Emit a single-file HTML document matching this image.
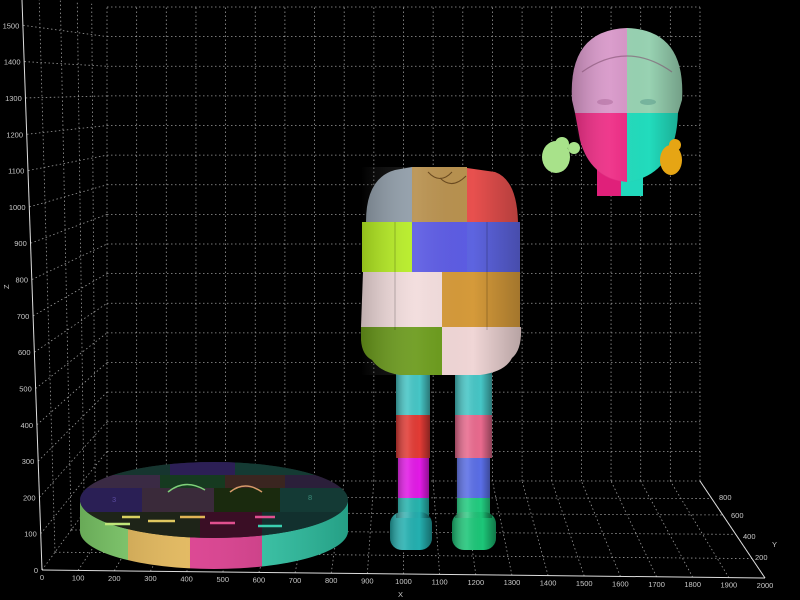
<!DOCTYPE html>
<html><head><meta charset="utf-8"><style>
html,body{margin:0;padding:0;background:#000;width:800px;height:600px;overflow:hidden}
svg{display:block}
text{font-family:"Liberation Sans",sans-serif;font-size:7.5px;fill:#c8c8c8}
</style></head><body>
<svg id="s" width="800" height="600" viewBox="0 0 800 600" xmlns="http://www.w3.org/2000/svg">
<defs>
<linearGradient id="sh" x1="0" x2="1"><stop offset="0" stop-color="#000" stop-opacity=".35"/><stop offset=".35" stop-color="#fff" stop-opacity=".12"/><stop offset=".7" stop-color="#000" stop-opacity="0"/><stop offset="1" stop-color="#000" stop-opacity=".4"/></linearGradient>
<linearGradient id="sh2" x1="0" x2="1"><stop offset="0" stop-color="#000" stop-opacity=".3"/><stop offset=".4" stop-color="#fff" stop-opacity=".15"/><stop offset="1" stop-color="#000" stop-opacity=".35"/></linearGradient>
<clipPath id="side"><path d="M80 502 L80 531 A134 38 0 0 0 348 531 L348 502 Z"/></clipPath>
<clipPath id="dc"><ellipse cx="214" cy="500" rx="134" ry="38"/></clipPath>
</defs>
<g id="grid" stroke="#9a9a9a" stroke-width="0.8" stroke-dasharray="1.5,2.5" fill="none"></g>
<g id="axes" stroke="#ddd" stroke-width="1" fill="none">
<line x1="42" y1="570" x2="22" y2="0"/>
<line x1="42" y1="570" x2="765" y2="578"/>
<line x1="765" y1="578" x2="700" y2="481"/>
</g>
<g id="labels"></g>
<text x="398" y="597">X</text>
<text x="772" y="547">Y</text>
<text x="4" y="290" transform="rotate(-90 6 287)">Z</text>

<!-- disk -->
<g>
<g clip-path="url(#side)">
<rect x="80" y="490" width="48" height="90" fill="#7fcf6a"/>
<rect x="128" y="490" width="62" height="90" fill="#e0b455"/>
<rect x="190" y="490" width="72" height="90" fill="#d9378a"/>
<rect x="262" y="490" width="86" height="90" fill="#2ec9a8"/>
<rect x="80" y="490" width="268" height="90" fill="url(#sh2)" opacity=".6"/>
</g>
<ellipse cx="214" cy="500" rx="134" ry="38" fill="#1e2a2a"/>
<g clip-path="url(#dc)">
<rect x="80" y="462" width="90" height="13" fill="#16352f"/>
<rect x="170" y="462" width="65" height="13" fill="#2c1f55"/>
<rect x="235" y="462" width="113" height="13" fill="#143a33"/>
<rect x="80" y="475" width="80" height="13" fill="#3a2a44"/>
<rect x="160" y="475" width="65" height="13" fill="#163a20"/>
<rect x="225" y="475" width="60" height="13" fill="#3a2520"/>
<rect x="285" y="475" width="63" height="13" fill="#2b1f3a"/>
<rect x="80" y="488" width="62" height="24" fill="#2a1f55"/>
<rect x="142" y="488" width="72" height="24" fill="#3a2a3a"/>
<rect x="214" y="488" width="66" height="24" fill="#1a2a0e"/>
<rect x="280" y="488" width="68" height="24" fill="#143a35"/>
<rect x="80" y="512" width="120" height="30" fill="#1e2418"/>
<rect x="200" y="512" width="62" height="30" fill="#3a0e25"/>
<rect x="262" y="512" width="86" height="30" fill="#12302e"/>
</g>
<path d="M168 492 Q185 478 205 490" stroke="#7fd07a" stroke-width="1.5" fill="none"/>
<path d="M230 492 Q245 480 262 492" stroke="#d79a6a" stroke-width="1.5" fill="none"/>
<text x="112" y="502" style="fill:#5a4aa0">3</text>
<text x="308" y="500" style="fill:#3a8a78">8</text>
<g stroke-width="2.5">
<line x1="105" y1="524" x2="130" y2="524" stroke="#bfe67a"/>
<line x1="122" y1="517" x2="140" y2="517" stroke="#d8d060"/>
<line x1="148" y1="521" x2="175" y2="521" stroke="#e0c860"/>
<line x1="180" y1="517" x2="205" y2="517" stroke="#e0b455"/>
<line x1="210" y1="523" x2="235" y2="523" stroke="#e0508f"/>
<line x1="255" y1="517" x2="275" y2="517" stroke="#e04f90"/>
<line x1="258" y1="526" x2="282" y2="526" stroke="#3ad0b0"/>
</g>
</g>

<!-- doll legs -->
<g>
<rect x="396" y="372" width="34" height="45" fill="#46c6c6"/>
<rect x="455" y="372" width="37" height="45" fill="#46c6c6"/>
<rect x="396" y="415" width="34" height="43" fill="#e23b35"/>
<rect x="455" y="415" width="37" height="43" fill="#e96a8e"/>
<rect x="398" y="458" width="31" height="40" fill="#e21ae6"/>
<rect x="457" y="458" width="33" height="40" fill="#5a6ee6"/>
<rect x="398" y="498" width="31" height="20" fill="#27b4ae"/>
<rect x="457" y="498" width="33" height="20" fill="#22cc80"/>
<rect x="390" y="512" width="42" height="38" rx="12" fill="#24b0b0"/>
<rect x="452" y="512" width="44" height="38" rx="12" fill="#1cc678"/>
<rect x="396" y="372" width="34" height="146" fill="url(#sh)"/>
<rect x="455" y="372" width="37" height="146" fill="url(#sh)"/>
<rect x="390" y="512" width="42" height="38" rx="12" fill="url(#sh)"/>
<rect x="452" y="512" width="44" height="38" rx="12" fill="url(#sh)"/>
</g>
<!-- doll body -->
<g>
<path d="M366 222 Q366 178 395 170 L412 167 L412 222 Z" fill="#8f9ca8"/>
<rect x="412" y="167" width="55" height="55" fill="#b8914f"/>
<path d="M467 168 L495 172 Q517 180 518 222 L467 222 Z" fill="#e8504e"/>
<rect x="362" y="222" width="50" height="50" fill="#b7ef21"/>
<rect x="412" y="222" width="55" height="50" fill="#5d5ce3"/>
<rect x="467" y="222" width="53" height="50" fill="#5d64e0"/>
<path d="M363 272 L442 272 L442 327 L361 327 Z" fill="#f2dcdc"/>
<rect x="442" y="272" width="78" height="55" fill="#d59a3a"/>
<path d="M361 327 L442 327 L442 375 L400 375 Q380 372 372 360 Q362 355 361 340 Z" fill="#6a9a1a"/>
<path d="M442 327 L521 327 Q522 350 512 358 Q505 372 480 375 L442 375 Z" fill="#f0d6d6"/>
<path d="M361 167 H521 V375 H361 Z" fill="url(#sh)" opacity=".6"/>
<path d="M395 222 V330 M487 222 V330" stroke="#000" stroke-opacity=".15" stroke-width="1.5"/>
<path d="M428 172 Q440 185 452 172" stroke="#6a4a20" fill="none"/>
<path d="M440 178 Q452 190 466 176" stroke="#6a4a20" fill="none"/>
</g>

<!-- head -->
<g>
<rect x="597" y="160" width="24" height="36" fill="#e0207a"/>
<rect x="621" y="160" width="22" height="36" fill="#21d8bc"/>
<path d="M572 100 Q568 30 627 28 L627 113 L575 113 Z" fill="#d796c8"/>
<path d="M627 28 Q686 30 682 100 L678 113 L627 113 Z" fill="#98d2b2"/>
<path d="M575 113 L627 113 L627 182 Q590 178 580 140 Z" fill="#ee2a84"/>
<path d="M627 113 L678 113 Q676 175 627 182 Z" fill="#22dcbd"/>
<path d="M572 100 Q568 30 627 28 Q686 30 682 100 Q676 180 627 182 Q578 180 572 100 Z" fill="url(#sh)" opacity=".6"/>
<path d="M582 72 Q627 40 672 72" stroke="#805070" stroke-width="1.2" fill="none" opacity=".6"/>
<ellipse cx="605" cy="102" rx="8" ry="3" fill="#b070a0" opacity=".6"/>
<ellipse cx="648" cy="102" rx="8" ry="3" fill="#60a090" opacity=".6"/>
<ellipse cx="556" cy="157" rx="14" ry="16" fill="#a8e28a"/>
<circle cx="562" cy="144" r="7" fill="#a8e28a"/>
<circle cx="574" cy="148" r="6" fill="#a8e28a"/>
<ellipse cx="671" cy="160" rx="11" ry="15" fill="#e6a514"/>
<circle cx="675" cy="145" r="6" fill="#e6a514"/>
</g>
</svg>
<script>
(function(){
var g=document.getElementById('grid'),L=document.getElementById('labels'),NS='http://www.w3.org/2000/svg';
function ln(a,b,c,d){var e=document.createElementNS(NS,'line');e.setAttribute('x1',a);e.setAttribute('y1',b);e.setAttribute('x2',c);e.setAttribute('y2',d);g.appendChild(e);}
function tx(x,y,t,anc){var e=document.createElementNS(NS,'text');e.setAttribute('x',x);e.setAttribute('y',y);if(anc)e.setAttribute('text-anchor',anc);e.textContent=t;L.appendChild(e);}
function F(u,w){return [42+723*u-20*w, 570+8*u-581*w];}
function B(u,w){return [107+593*u, 481-474*w];}
function P(u,v,w){var f=F(u,w),b=B(u,w);return [f[0]+(b[0]-f[0])*v,f[1]+(b[1]-f[1])*v];}
var i,p,q,D=[0.2,0.45,0.65,0.82];
for(i=0;i<=20;i++){p=B(i/20,0);q=B(i/20,1);ln(p[0],p[1],q[0],q[1]);}
for(i=0;i<=16;i++){p=B(0,i/16);q=B(1,i/16);ln(p[0],p[1],q[0],q[1]);}
for(i=0;i<=20;i++){p=F(i/20,0);q=B(i/20,0);ln(p[0],p[1],q[0],q[1]);}
D.forEach(function(v){p=P(0,v,0);q=P(1,v,0);ln(p[0],p[1],q[0],q[1]);});
for(i=1;i<=15;i++){p=F(0,i/16);q=B(0,i/16);ln(p[0],p[1],q[0],q[1]);}
D.forEach(function(v){p=P(0,v,0);q=P(0,v,1);ln(p[0],p[1],q[0],q[1]);});
for(i=0;i<=15;i++){p=F(0,i/16);tx(p[0]-4,p[1]+3,String(i*100),'end');}
for(i=0;i<=20;i++){p=F(i/20,0);tx(p[0],p[1]+10,String(i*100),'middle');}
var yl=[[200,750,557],[400,738,536],[600,726,515],[800,714,497]];
yl.forEach(function(a){tx(a[1]+5,a[2]+3,String(a[0]));});
})();
</script>
</body></html>
